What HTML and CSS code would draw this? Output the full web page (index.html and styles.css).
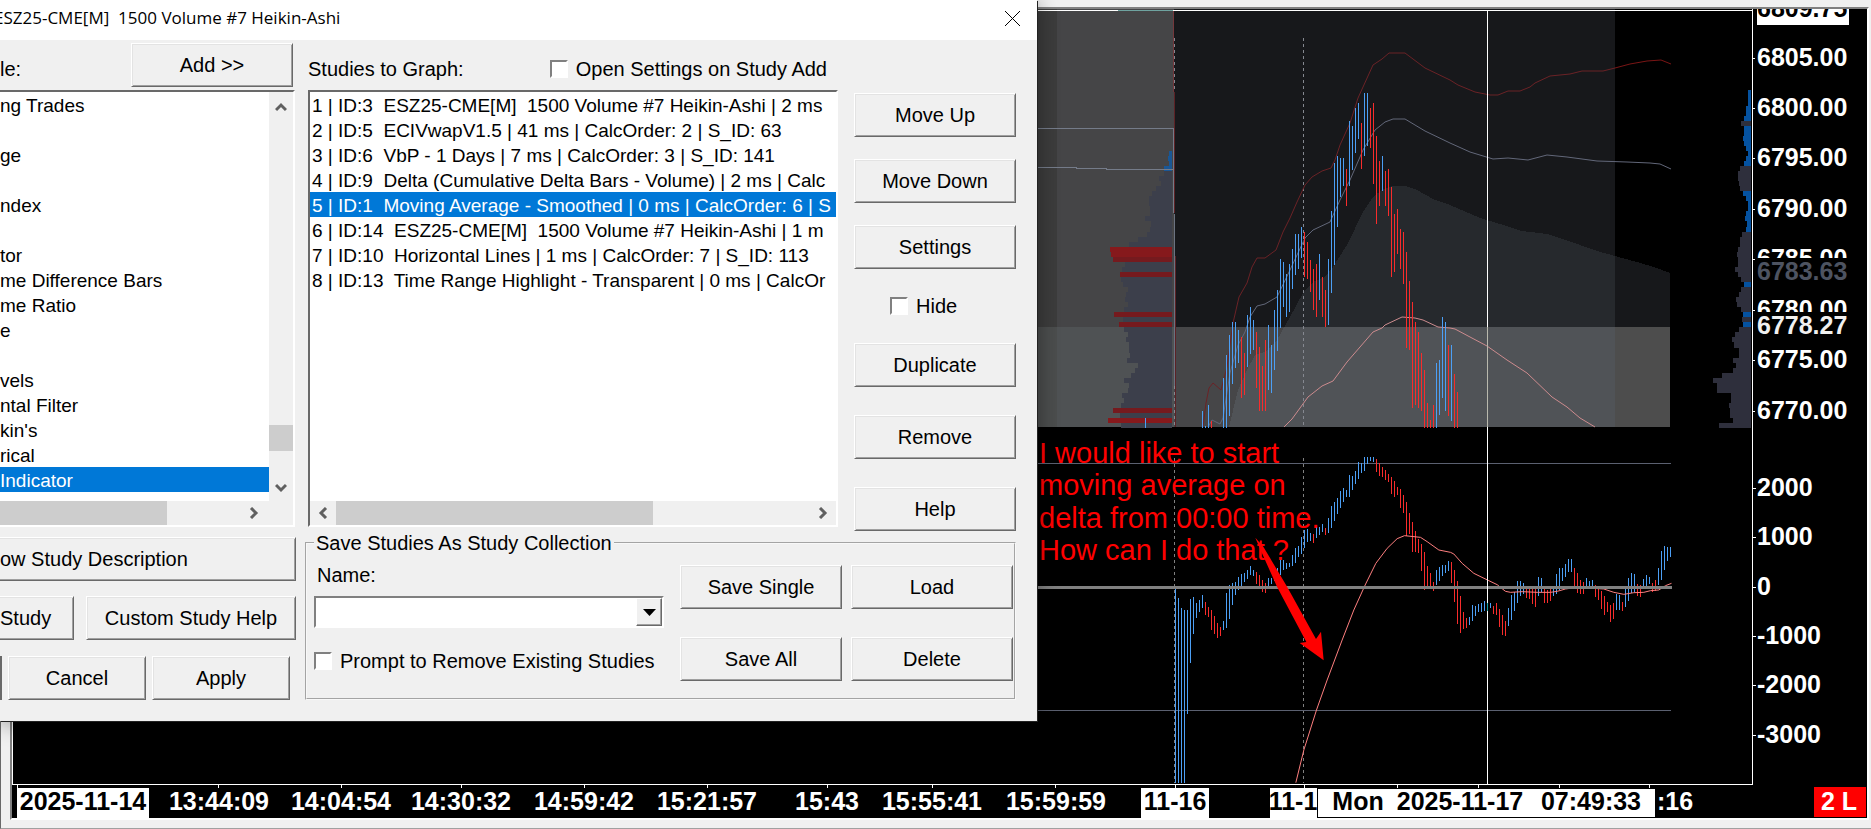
FILE: index.html
```html
<!DOCTYPE html>
<html lang="en">
<head>
<meta charset="utf-8">
<title>ESZ25-CME[M] 1500 Volume #7 Heikin-Ashi</title>
<link rel="stylesheet" href="styles.css">
</head>
<body>
<main class="chart-window">
  <div class="chart-frame">
    <svg class="plot" viewBox="12 9 1741 776" preserveAspectRatio="none" role="img" aria-label="Price and cumulative delta chart">
      <rect x="12" y="9" width="1741" height="776" fill="#000"/>
      <!-- session backgrounds -->
      <g shape-rendering="crispEdges">
        <rect x="1030" y="9" width="27" height="318" fill="#3c3c3c"/>
        <rect x="1057" y="9" width="117" height="318" fill="#454547"/>
        <rect x="1174" y="9" width="441" height="318" fill="#17181b"/>
        <rect x="1030" y="327" width="27" height="100" fill="#4b4d4d"/>
        <rect x="1057" y="327" width="117" height="100" fill="#4f5254"/>
        <rect x="1174" y="327" width="441" height="100" fill="#464648"/>
        <clipPath id="above"><rect x="1174" y="11" width="441" height="316"/></clipPath>
        <clipPath id="above-late"><rect x="1615" y="11" width="60" height="316"/></clipPath>
        <clipPath id="band"><rect x="1174" y="327" width="441" height="100"/></clipPath>
        <path clip-path="url(#above)" fill="#26292d" d="M1229 427L1238 390 1247 370 1255 355 1265 352 1277 340 1290 317 1303 293 1313 282 1325 277 1333 267 1347 245 1363 212 1373 197 1383 189 1393 186 1405 186 1417 190 1433 199 1450 205 1480 218 1500 224 1522 231 1547 234 1580 245 1597 251 1615 256V427Z"/>
        <path clip-path="url(#band)" fill="#505357" d="M1229 427L1238 390 1247 370 1255 355 1265 352 1277 340 1290 317V320H1615V427Z"/>
        <path clip-path="url(#above-late)" fill="#17181b" d="M1615 256L1637 262 1657 268 1670 273V327H1615Z"/>
        <rect x="1615" y="327" width="55" height="100" fill="#4d4d4d"/>
      </g>
      <!-- volume profile of the previous session -->
      <g transform="translate(1030 0) scale(.33333)" shape-rendering="crispEdges">
        <path fill="#3c3f4b" d="M426 513H402V528H387V543H393V558H378V573H366V588H357V618H360V648H345V663H363V681H360V696H351V711H324V726H297V741H285V801H276V831H273V846H279V861H294V876H288V891H285V906H294V921H282V936H279V981H282V996H294V1011H288V1026H297V1059H300V1074H291V1089H324V1104H315V1119H303V1134H282V1149H297V1164H294V1179H276V1194H282V1209H273V1239H270V1269H273V1283H426Z"/>
        <path fill="#1a5796" d="M426 453H417V468H414V483H417V498H402V513H426Z"/>
        <path fill="#86191c" d="M240 741H426V771H243V756H240ZM234 1254H426V1269H234Z"/>
        <path fill="#751a1e" d="M249 771H426V786H249ZM270 816H426V831H270ZM252 936H426V951H252ZM267 966H426V981H267ZM249 1224H426V1239H249Z"/>
      </g>
      <!-- volume profile beside the price axis -->
      <g transform="translate(1450 0) scale(.33333)" shape-rendering="crispEdges">
        <path fill="#0552a0" d="M903 270H894V318H888V348H882V408H879V423H882V438H888V453H894V468H888V483H882V498H903ZM903 573H879V588H888V603H894V633H888V648H885V663H891V681H888V696H903ZM882 846H903V861H882ZM879 936H903V981H879Z"/>
        <path fill="#2e2f3c" d="M873 363H903V378H873ZM903 498H870V513H864V543H867V558H870V573H903ZM903 696H876V711H870V741H864V756H861V771H864V801H855V816H864V831H873V846H903ZM903 861H873V876H867V891H858V906H861V921H873V936H903ZM876 951H903V966H876ZM903 981H867V996H855V1011H846V1026H852V1044H867V1074H849V1089H858V1104H849V1119H816V1134H789V1149H801V1179H843V1209H837V1224H840V1254H849V1269H807V1284H903Z"/>
      </g>
      <g fill="none" shape-rendering="crispEdges">
        <path stroke="#747b89" d="M1030 128.500H1173.500V213M1030 167.500H1076V168.500H1106V169.500H1173"/>
        <path stroke="#858890" stroke-dasharray="3 3" d="M1174.500 38V92M1303.500 38V427M1174.500 386V427"/>
        <path stroke="#808080" stroke-dasharray="3 3" d="M1174.500 458V783M1303.500 458V783"/>
        <path stroke="#74383c" d="M1173.500 11V92"/>
        <path stroke="#5d2226" d="M1174.500 92V213M1175.500 256V427"/>
        <path stroke="#6b7280" d="M1174.500 214V386"/>
        <path stroke="#5b6070" d="M1030 463.500H1671M1030 710.500H1671"/>
      </g>
      <!-- VWAP bands and moving average -->
      <g fill="none" stroke-linejoin="round">
        <path stroke="#6b2226" d="M1203 427L1206 403 1209 388 1213 383 1221 390 1227 367 1233 323 1239 297 1247 283 1252 267 1257 258 1265 258 1276 250 1283 232 1290 218 1297 202 1305 185 1312 177 1322 171 1331 168 1335 160 1340 145 1350 123 1358 98 1373 65 1382 59 1389 53 1405 53 1425 68 1450 80 1458 85 1475 92 1490 95 1498 95 1508 91 1520 91 1530 87 1535 83 1550 76 1570 74 1582 71 1603 71 1615 68"/>
        <path stroke="#7a1515" d="M1615 68L1630 64 1647 61 1661 60 1671 64"/>
        <path stroke="#626779" d="M1208 427L1212 420 1220 424 1223 418 1230 373 1238 345 1245 332 1250 317 1257 306 1265 304 1277 297 1290 270 1305 238 1313 230 1330 222 1340 200 1350 180 1363 150 1375 130 1385 122 1393 119 1405 119 1425 131 1450 143 1470 152 1493 159 1508 158 1528 160 1547 155 1567 157 1597 161 1627 162 1650 163 1660 164 1671 169"/>
        <path stroke="#cc8b8e" d="M1284 427L1292 419 1308 397 1322 386 1333 381 1347 362 1373 332 1382 328 1385 325 1402 317 1415 318 1423 320 1438 327 1450 328 1455 329 1470 337 1487 346 1507 360 1527 373 1552 397 1567 407 1580 418 1595 427"/>
      </g>
      <!-- price bars -->
      <g transform="translate(1030.500 0) scale(.33333)" fill="none" stroke-width="3" shape-rendering="crispEdges">
        <path stroke="#4c9ff5" d="M345 1254V1283M516 1233V1283M525 1278V1283M534 1215V1283M579 1134V1283M588 1065V1283M597 1005V1248M606 966V1152M615 966V1104M624 990V1089M651 945V1101M660 921V1062M669 960V1050M714 975V1170M723 1035V1179M732 930V1110M741 870V1053M750 777V984M759 786V921M768 822V951M777 792V936M786 747V867M795 702V825M804 702V807M813 681V774M867 762V900M894 777V975M903 633V879M912 489V795M921 468V681M930 474V591M939 474V558M957 363V558M966 378V510M975 324V459M984 309V417M1002 279V468M1011 279V438M1056 468V573M1218 1089V1283M1227 1080V1245M1236 951V1194M1245 966V1233M1263 1035V1263"/>
        <path stroke="#f82c2c" d="M543 1263V1283M633 1011V1194M642 1059V1185M678 996V1164M687 1041V1233M696 1098V1233M705 1020V1233M822 696V831M831 726V837M840 780V876M849 807V930M858 792V951M876 831V951M885 870V981M948 507V618M993 369V507M1020 324V444M1029 309V552M1038 408V672M1047 483V618M1065 513V618M1074 507V648M1083 561V831M1092 642V816M1101 627V762M1110 687V807M1119 696V852M1128 756V1044M1137 843V1050M1146 906V1224M1155 966V1215M1164 996V1224M1173 1059V1233M1182 1110V1283M1191 1209V1283M1200 1260V1283M1209 1215V1283M1254 1035V1248M1272 1122V1283M1281 1176V1283"/>
      </g>
      <!-- cumulative delta bars -->
      <g transform="translate(1030.500 430) scale(.33333)" fill="none" stroke-width="3" shape-rendering="crispEdges">
        <path stroke="#4c9ff5" d="M435 477V1058M444 504V1058M453 534V1058M462 540V1058M471 540V852M480 507V699M489 501V612M498 519V564M507 510V546M516 495V534M579 573V600M588 489V594M597 465V567M606 459V525M615 456V495M624 441V480M633 432V471M642 429V456M651 420V447M660 408V435M669 420V438M714 444V468M723 444V462M732 430V452M741 415V445M750 390V435M759 390V420M768 399V417M777 399V411M786 375V408M795 354V399M804 348V381M813 321V372M822 300V354M831 297V336M840 309V333M858 291V324M867 291V315M876 282V306M894 264V309M903 228V294M912 216V273M921 204V252M930 183V234M939 174V216M948 180V201M957 135V201M966 138V180M975 123V162M984 96V147M993 100V129M1002 81V123M1011 81V102M1020 81V93M1029 81V96M1218 420V465M1227 411V453M1236 405V438M1245 405V429M1254 393V423"/>
        <path stroke="#f82c2c" d="M525 516V555M534 531V561M543 540V600M552 558V612M561 579V624M570 591V618M678 426V462M687 435V471M696 450V486M705 459V489M849 312V339M885 294V315M1038 87V126M1047 99V138M1056 111V141M1065 120V150M1074 132V156M1083 141V192M1092 153V201M1101 171V195M1110 177V234M1119 195V249M1128 216V318M1137 249V312M1146 276V366M1155 303V366M1164 327V370M1173 342V423M1182 366V480M1191 408V471M1200 429V468M1209 456V483"/>
      </g>
      <g transform="translate(1450.500 430) scale(.33333)" fill="none" stroke-width="3" shape-rendering="crispEdges">
        <path stroke="#4c9ff5" d="M57 561V585M66 525V573M75 528V558M84 522V546M93 519V546M102 513V543M120 519V534M174 534V588M183 495V570M192 486V543M201 453V519M210 453V498M219 459V492M264 441V498M273 444V486M309 477V498M318 432V492M327 414V480M336 414V453M345 402V441M354 387V426M363 387V426M408 444V471M417 453V471M426 450V471M498 492V540M507 495V540M525 471V531M534 444V513M543 429V489M552 432V486M579 447V471M588 435V471M597 441V462M624 414V465M633 363V450M642 348V420M651 351V393M660 351V381"/>
        <path stroke="#f82c2c" d="M3 396V459M12 420V516M21 453V582M30 498V609M39 546V597M48 564V594M129 528V552M138 519V555M147 537V591M156 555V615M165 573V618M228 471V504M237 477V507M246 477V522M255 477V531M282 477V519M291 480V519M300 477V513M372 414V471M381 429V489M390 450V492M399 456V492M435 465V501M444 471V510M453 483V537M462 498V555M471 516V546M480 525V576M489 519V567M516 516V543M561 462V498M570 465V501M606 459V486M615 450V483"/>
      </g>
      <path transform="translate(1030.500 430) scale(.33333)" fill="none" stroke="#ff8080" stroke-width="3" d="M796 1058L820 960 858 840 890 750 935 630 970 540 1004 465 1036 400 1070 355 1100 326 1122 317 1170 322 1190 335 1225 360 1260 367 1270 372 1295 400 1330 430 1375 452 1400 464 1425 484 1440 487 1475 485 1520 487 1560 487 1580 484 1605 477 1640 472 1720 477 1750 487 1780 493 1810 488 1840 487 1860 482 1885 480 1905 467 1923 460"/>
      <rect x="1030" y="586" width="642" height="3" fill="#808080"/>
      <g shape-rendering="crispEdges" fill="#fff">
        <rect x="12" y="10" width="1740" height="1"/>
        <rect x="1118" y="10" width="55" height="1" fill="#6fa3a0"/>
        <rect x="12" y="10" width="1" height="775"/>
        <rect x="1487" y="10" width="1" height="774"/>
        <rect x="1487" y="603" width="1" height="8" fill="#14a0a0"/>
        <rect x="1487" y="327" width="1" height="100" fill="#b9b9ad"/>
        <rect x="12" y="784" width="1741" height="1"/>
        <rect x="1752" y="9" width="1" height="776"/>
      </g>
      <text class="note">
        <tspan x="1039" y="463">I would like to start</tspan>
        <tspan x="1039" y="495">moving average on</tspan>
        <tspan x="1039" y="528">delta from 00:00 time.</tspan>
        <tspan x="1039" y="560">How can I do that ?</tspan>
      </text>
      <path transform="translate(1030 430) scale(.33333)" fill="#f00" d="M676 323L700 350 770 468 858 627 873 605 881 691 809 639 829 636 741 470 688 352Z"/>
    </svg>
    <svg class="price-axis" viewBox="1753 9 114 776" preserveAspectRatio="none" role="img" aria-label="Price axis">
      <path shape-rendering="crispEdges" stroke="#fff" d="M1753 58.500h2M1753 108.500h2M1753 158.500h2M1753 209.500h2M1753 259.500h2M1753 310.500h2M1753 360.500h2M1753 411.500h2M1753 488.500h3M1753 537.500h3M1753 587.500h3M1753 636.500h3M1753 685.500h3M1753 735.500h3"/>
      <rect x="1757" y="9" width="92" height="16" fill="#fff"/>
      <g class="tick-label">
        <text class="dark" x="1757" y="17">6809.75</text>
        <text x="1757" y="66">6805.00</text>
        <text x="1757" y="116">6800.00</text>
        <text x="1757" y="166">6795.00</text>
        <text x="1757" y="217">6790.00</text>
        <text x="1757" y="267">6785.00</text>
        <text x="1757" y="318">6780.00</text>
        <rect class="cover" x="1757" y="258" width="100" height="25"/>
        <rect class="cover" x="1757" y="312" width="100" height="25"/>
        <text class="muted" x="1757" y="280">6783.63</text>
        <text class="soft" x="1757" y="334">6778.27</text>
        <text x="1757" y="368">6775.00</text>
        <text x="1757" y="419">6770.00</text>
        <text x="1757" y="496">2000</text>
        <text x="1757" y="545">1000</text>
        <text x="1757" y="595">0</text>
        <text x="1757" y="644">-1000</text>
        <text x="1757" y="693">-2000</text>
        <text x="1757" y="743">-3000</text>
      </g>
    </svg>
    <svg class="time-axis" viewBox="12 785 1855 33" preserveAspectRatio="none" role="img" aria-label="Time axis">
      <path shape-rendering="crispEdges" stroke="#fff" d="M17.500 785v3M218.500 785v3M341.500 785v3M461.500 785v3M584.500 785v3M707.500 785v3M827.500 785v3M932.500 785v3M1055.500 785v3M1175.500 785v3M1304.500 785v3M1397.500 785v3M1478.500 785v3M1559.500 785v3M1649.500 785v3"/>
      <rect x="17" y="788" width="132" height="30" fill="#fff"/>
      <rect x="1141" y="788" width="68" height="30" fill="#fff"/>
      <rect x="1270" y="788" width="47" height="30" fill="#fff"/>
      <g class="tick-label time">
        <text class="dark" x="83" y="810">2025-11-14</text>
        <text x="219" y="810">13:44:09</text>
        <text x="341" y="810">14:04:54</text>
        <text x="461" y="810">14:30:32</text>
        <text x="584" y="810">14:59:42</text>
        <text x="707" y="810">15:21:57</text>
        <text x="827" y="810">15:43</text>
        <text x="932" y="810">15:55:41</text>
        <text x="1056" y="810">15:59:59</text>
        <text class="dark" x="1175" y="810">11-16</text>
        <text class="dark" x="1293" y="810">11-1</text>
        <text x="1675" y="810">:16</text>
        <rect x="1317" y="788" width="339" height="30" fill="#000"/>
        <rect x="1318" y="789" width="337" height="28" fill="#fff"/>
        <text class="dark" x="1358" y="810">Mon</text>
        <text class="dark" x="1460" y="810">2025-11-17</text>
        <text class="dark" x="1591" y="810">07:49:33</text>
        <rect x="1814" y="787" width="52" height="30" fill="#f00"/>
        <text x="1839" y="810">2 L</text>
      </g>
    </svg>
  </div>
</main>

<section class="dialog" role="dialog" aria-labelledby="dialog-title">
  <header class="title-bar">
    <h1 class="dialog-title" id="dialog-title">ESZ25-CME[M]  1500 Volume #7 Heikin-Ashi</h1>
    <button class="close" type="button" aria-label="Close">
      <svg width="15" height="15" viewBox="0 0 15 15"><path d="M0 0L15 15M15 0L0 15" stroke="#000" fill="none"/></svg>
    </button>
  </header>
  <div class="dialog-body">
    <div class="available">
      <div class="list-head">
        <span id="available-label">le:</span>
        <button class="btn add" type="button">Add &gt;&gt;</button>
      </div>
      <div class="list-box cut">
        <div class="list-row">
          <ul class="items" role="listbox" aria-labelledby="available-label">
            <li role="option">ng Trades</li>
            <li role="option"></li>
            <li role="option">ge</li>
            <li role="option"></li>
            <li role="option">ndex</li>
            <li role="option"></li>
            <li role="option">tor</li>
            <li role="option">me Difference Bars</li>
            <li role="option">me Ratio</li>
            <li role="option">e</li>
            <li role="option"></li>
            <li role="option">vels</li>
            <li role="option">ntal Filter</li>
            <li role="option">kin's</li>
            <li role="option">rical</li>
            <li role="option" class="selected" aria-selected="true">Indicator</li>
          </ul>
          <div class="v-scroll">
            <svg width="12" height="10" viewBox="0 0 12 10"><path d="M1 8L6 3 11 8" class="chev"/></svg>
            <span class="v-thumb"></span>
            <svg width="12" height="10" viewBox="0 0 12 10"><path d="M1 2L6 7 11 2" class="chev"/></svg>
          </div>
        </div>
        <div class="h-scroll short">
          <span class="h-thumb"></span>
          <svg width="10" height="12" viewBox="0 0 10 12"><path d="M2 1L7 6 2 11" class="chev"/></svg>
        </div>
      </div>
      <button class="btn cut description" type="button">ow Study Description</button>
      <div class="pair">
        <button class="btn cut custom" type="button">Study</button>
        <button class="btn grow" type="button">Custom Study Help</button>
      </div>
      <div class="actions">
        <button class="btn grow" type="button">Cancel</button>
        <button class="btn grow" type="button">Apply</button>
      </div>
    </div>

    <div class="graph">
      <div class="graph-top">
        <div class="studies">
          <div class="list-head">
            <span id="graph-label">Studies to Graph:</span>
            <label class="check open-settings"><input type="checkbox">Open Settings on Study Add</label>
          </div>
          <div class="list-box">
            <ul class="items inset" role="listbox" aria-labelledby="graph-label">
              <li role="option">1 | ID:3  ESZ25-CME[M]  1500 Volume #7 Heikin-Ashi | 2 ms</li>
              <li role="option">2 | ID:5  ECIVwapV1.5 | 41 ms | CalcOrder: 2 | S_ID: 63</li>
              <li role="option">3 | ID:6  VbP - 1 Days | 7 ms | CalcOrder: 3 | S_ID: 141</li>
              <li role="option">4 | ID:9  Delta (Cumulative Delta Bars - Volume) | 2 ms | Calc</li>
              <li role="option" class="selected" aria-selected="true">5 | ID:1  Moving Average - Smoothed | 0 ms | CalcOrder: 6 | S</li>
              <li role="option">6 | ID:14  ESZ25-CME[M]  1500 Volume #7 Heikin-Ashi | 1 m</li>
              <li role="option">7 | ID:10  Horizontal Lines | 1 ms | CalcOrder: 7 | S_ID: 113</li>
              <li role="option">8 | ID:13  Time Range Highlight - Transparent | 0 ms | CalcOr</li>
            </ul>
            <div class="h-scroll">
              <svg width="10" height="12" viewBox="0 0 10 12"><path d="M8 1L3 6 8 11" class="chev"/></svg>
              <span class="h-thumb wide"></span>
              <svg width="10" height="12" viewBox="0 0 10 12"><path d="M2 1L7 6 2 11" class="chev"/></svg>
            </div>
          </div>
        </div>
        <div class="commands">
          <button class="btn" type="button">Move Up</button>
          <button class="btn" type="button">Move Down</button>
          <button class="btn" type="button">Settings</button>
          <label class="check hide"><input type="checkbox">Hide</label>
          <div class="commands-low">
            <button class="btn" type="button">Duplicate</button>
            <button class="btn" type="button">Remove</button>
            <button class="btn" type="button">Help</button>
          </div>
        </div>
      </div>
      <fieldset class="collection">
        <legend>Save Studies As Study Collection</legend>
        <div class="collection-grid">
          <div class="naming">
            <label for="collection-name">Name:</label>
            <div class="combo">
              <select id="collection-name"><option></option></select>
              <span class="combo-arrow"><svg width="13" height="7" viewBox="0 0 13 7"><path d="M0 0H13L6.500 7Z"/></svg></span>
            </div>
            <label class="check prompt"><input type="checkbox">Prompt to Remove Existing Studies</label>
          </div>
          <div class="saving">
            <button class="btn" type="button">Save Single</button>
            <button class="btn" type="button">Load</button>
            <button class="btn" type="button">Save All</button>
            <button class="btn" type="button">Delete</button>
          </div>
        </div>
      </fieldset>
    </div>
  </div>
</section>
</body>
</html>
```
FILE: styles.css
```css
* { box-sizing: border-box; }

body {
  margin: 0;
  background: #f0f0f0;
  color: #000;
  font: 20px/24px "Liberation Sans", Arial, sans-serif;
  overflow: hidden;
}

svg { display: block; }

/* chart window */
.chart-window {
  height: 100vh;
  padding: 7px 2px 8px 9px;
  border-left: 1px solid #696969;
  border-bottom: 1px solid #a0a0a0;
}
.chart-frame {
  height: 100%;
  display: grid;
  grid-template: minmax(0, 1fr) 33px / minmax(0, 1fr) 114px;
  border: 2px solid;
  border-color: #808080 #fff #fff #808080;
  background: #000;
}
.plot, .price-axis, .time-axis { width: 100%; height: 100%; }
.time-axis { grid-column: 1 / -1; }
.tick-label {
  fill: #fff;
  font: bold 25px "Liberation Sans", Arial, sans-serif;
}
.time { text-anchor: middle; }
.dark, .cover { fill: #000; }
.muted { fill: #4d5361; }
.soft { fill: #f0f0f0; }
.note {
  fill: #f00;
  font: 29px "Liberation Sans", Arial, sans-serif;
}

/* dialog */
.dialog {
  position: absolute;
  top: 0;
  left: 0;
  width: min(1037px, 100%);
  background: #f0f0f0;
  box-shadow: 1px 1px 0 #222, 0 2px 20px rgba(0, 0, 0, .4);
}
.title-bar {
  height: 40px;
  display: flex;
  align-items: center;
  justify-content: space-between;
  padding: 0 17px 4px 0;
  background: #fff;
  overflow: hidden;
}
.dialog-title {
  margin: 0 0 0 -6px;
  font: 17px/24px "Open Sans", "Noto Sans", sans-serif;
  white-space: pre;
}
.close {
  padding: 0;
  border: 0;
  background: none;
}
.dialog-body {
  display: grid;
  grid-template-columns: 296px minmax(0, 1fr);
  gap: 9px;
  padding: 3px 21px 21px 0;
}

.btn {
  height: 44px;
  padding: 0;
  border: 1px solid;
  border-color: #fff #696969 #696969 #fff;
  background: #f0f0f0;
  box-shadow: inset 1px 1px #e3e3e3, inset -1px -1px #a0a0a0;
  color: inherit;
  font: inherit;
}
.btn.cut {
  border-left: 0;
  box-shadow: inset 0 1px #e3e3e3, inset -1px -1px #a0a0a0;
  text-align: left;
}
.grow { flex: 1; }

.list-head {
  height: 44px;
  margin-bottom: 3px;
  display: flex;
  align-items: center;
  justify-content: space-between;
  padding-top: 8px;
}
.add {
  width: 162px;
  margin: -8px 3px 0 0;
}
.list-box {
  height: 437px;
  display: flex;
  flex-direction: column;
  border: 2px solid;
  border-color: #696969 #fff #fff #696969;
  background: #fff;
}
.list-box.cut { border-left: 0; width: 295px; }
.list-row { flex: 1; display: flex; min-height: 0; }
.items {
  flex: 1;
  margin: 0;
  padding: 0;
  list-style: none;
  font-size: 19px;
  overflow: hidden;
}
.items li {
  height: 25px;
  line-height: 27px;
  white-space: pre;
}
.inset li { padding-left: 2px; }
.items .selected { background: #0078d7; color: #fff; }

.v-scroll {
  width: 24px;
  display: flex;
  flex-direction: column;
  align-items: center;
  padding: 10px 0 8px;
  background: #f0f0f0;
}
.v-thumb {
  width: 100%;
  height: 26px;
  margin: auto 0 32px;
  background: #cdcdcd;
}
.h-scroll {
  height: 24px;
  display: flex;
  align-items: center;
  justify-content: space-between;
  padding: 0 8px;
  background: #f0f0f0;
}
.h-scroll.short { padding: 0 34px 0 0; }
.h-thumb {
  width: 167px;
  height: 100%;
  background: #cdcdcd;
}
.h-thumb.wide { width: 317px; margin: 0 auto 0 8px; }
.chev { fill: none; stroke: #606060; stroke-width: 3; }

.available { display: flex; flex-direction: column; }
.description { margin-top: 10px; }
.pair { display: flex; gap: 12px; margin: 15px 0 16px; }
.custom { width: 74px; }
.actions {
  display: flex;
  gap: 6px;
  padding: 0 6px;
  border-left: 2px solid #696969;
}

.graph-top {
  display: grid;
  grid-template-columns: minmax(0, 1fr) 162px;
  gap: 16px;
  padding-left: 3px;
}
.check { display: flex; align-items: center; gap: 8px; }
.check input {
  appearance: none;
  flex: none;
  width: 18px;
  height: 18px;
  margin: 0;
  border: 2px solid;
  border-color: #808080 #fff #fff #808080;
  background: #fff;
}
.open-settings { margin-right: 11px; }
.commands {
  display: flex;
  flex-direction: column;
  gap: 22px;
  padding-top: 50px;
}
.hide { height: 30px; padding-left: 36px; }
.commands-low { display: flex; flex-direction: column; gap: 28px; }

.collection {
  min-width: 0;
  margin: 0;
  padding: 0 1px 17px 7px;
  border: 2px groove #f8f8f8;
}
.collection legend { padding: 0 2px; }
.collection-grid {
  display: grid;
  grid-template-columns: minmax(0, 350px) minmax(0, 333px);
  justify-content: space-between;
  padding-top: 8px;
}
.naming { display: flex; flex-direction: column; }
.naming > label:first-child { padding-left: 3px; }
.combo { position: relative; margin: 9px 0 21px; }
.combo select {
  display: block;
  appearance: none;
  width: 100%;
  height: 32px;
  border: 2px solid;
  border-color: #808080 #fff #fff #808080;
  border-radius: 0;
  background: #fff;
  font: inherit;
}
.combo-arrow {
  position: absolute;
  inset: 2px 2px 2px auto;
  width: 26px;
  display: grid;
  place-items: center;
  border: 1px solid;
  border-color: #fff #696969 #696969 #fff;
  background: #f0f0f0;
  box-shadow: inset -1px -1px #a0a0a0;
  pointer-events: none;
}
.saving {
  display: grid;
  grid-template-columns: 1fr 1fr;
  gap: 28px 9px;
  padding-top: 2px;
}
```
